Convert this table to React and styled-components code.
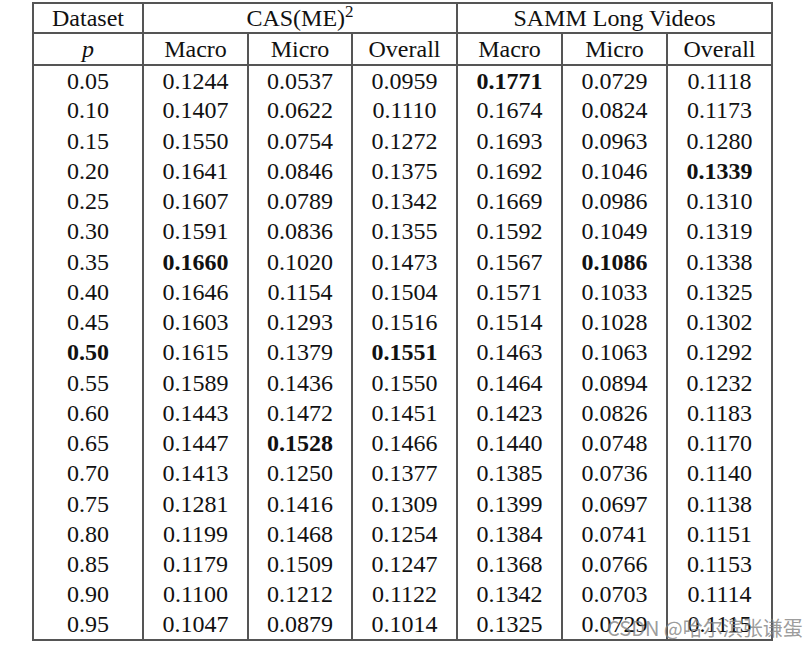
import React from 'react';
import styled, { createGlobalStyle } from 'styled-components';

const GlobalStyle = createGlobalStyle`
    body {
        margin: 0;
        background: #fff;
    }
`;

const rows = [
    ['0.05', '0.1244', '0.0537', '0.0959', '0.1771', '0.0729', '0.1118'],
    ['0.10', '0.1407', '0.0622', '0.1110', '0.1674', '0.0824', '0.1173'],
    ['0.15', '0.1550', '0.0754', '0.1272', '0.1693', '0.0963', '0.1280'],
    ['0.20', '0.1641', '0.0846', '0.1375', '0.1692', '0.1046', '0.1339'],
    ['0.25', '0.1607', '0.0789', '0.1342', '0.1669', '0.0986', '0.1310'],
    ['0.30', '0.1591', '0.0836', '0.1355', '0.1592', '0.1049', '0.1319'],
    ['0.35', '0.1660', '0.1020', '0.1473', '0.1567', '0.1086', '0.1338'],
    ['0.40', '0.1646', '0.1154', '0.1504', '0.1571', '0.1033', '0.1325'],
    ['0.45', '0.1603', '0.1293', '0.1516', '0.1514', '0.1028', '0.1302'],
    ['0.50', '0.1615', '0.1379', '0.1551', '0.1463', '0.1063', '0.1292'],
    ['0.55', '0.1589', '0.1436', '0.1550', '0.1464', '0.0894', '0.1232'],
    ['0.60', '0.1443', '0.1472', '0.1451', '0.1423', '0.0826', '0.1183'],
    ['0.65', '0.1447', '0.1528', '0.1466', '0.1440', '0.0748', '0.1170'],
    ['0.70', '0.1413', '0.1250', '0.1377', '0.1385', '0.0736', '0.1140'],
    ['0.75', '0.1281', '0.1416', '0.1309', '0.1399', '0.0697', '0.1138'],
    ['0.80', '0.1199', '0.1468', '0.1254', '0.1384', '0.0741', '0.1151'],
    ['0.85', '0.1179', '0.1509', '0.1247', '0.1368', '0.0766', '0.1153'],
    ['0.90', '0.1100', '0.1212', '0.1122', '0.1342', '0.0703', '0.1114'],
    ['0.95', '0.1047', '0.0879', '0.1014', '0.1325', '0.0729', '0.1115'],
];

// best values, "row-col"
const bold = new Set(['0-4', '3-6', '6-1', '6-5', '9-0', '9-3', '12-2']);

const colWidths = [110, 105, 104, 105, 105, 105, 105];

const App = () => {
    return (
        <>
            <GlobalStyle />
            <Page>
                <Table>
                    <colgroup>
                        {colWidths.map((w, i) => <col key={i} style={{ width: w }} />)}
                    </colgroup>
                    <thead>
                        <HeadRow $h={30}>
                            <Th>Dataset</Th>
                            <Th colSpan={3}>CAS(ME)<Sup>2</Sup></Th>
                            <Th colSpan={3}>SAMM Long Videos</Th>
                        </HeadRow>
                        <HeadRow $h={32}>
                            <Th><Italic>p</Italic></Th>
                            <Th>Macro</Th>
                            <Th>Micro</Th>
                            <Th>Overall</Th>
                            <Th>Macro</Th>
                            <Th>Micro</Th>
                            <Th>Overall</Th>
                        </HeadRow>
                    </thead>
                    <tbody>
                        {rows.map((r, ri) => (
                            <Row key={ri}>
                                {r.map((v, ci) => (
                                    <Td key={ci} $bold={bold.has(`${ri}-${ci}`)}>{v}</Td>
                                ))}
                            </Row>
                        ))}
                    </tbody>
                </Table>
                <Watermark>CSDN @哈尔滨张谦蛋</Watermark>
            </Page>
        </>
    );
};

export default App;

const serif = `"Liberation Serif", "Times New Roman", serif`;

const Page = styled.div`
    position: relative;
    width: 811px;
    height: 650px;
    padding: 2px 0 0 32px;
    box-sizing: border-box;
    font-family: ${serif};
    color: #111;
`;

const Table = styled.table`
    border-collapse: collapse;
    table-layout: fixed;
    border: 2px solid #555;
    font-family: ${serif};
    font-size: 24px;
    color: #111;
`;

const HeadRow = styled.tr`
    height: ${p => p.$h}px;
`;

const Th = styled.th`
    font-family: ${serif};
    font-size: 24px;
    font-weight: normal;
    text-align: center;
    padding: 0;
    border: 2px solid #555;
    line-height: 1;
`;

const Sup = styled.sup`
    font-size: 17px;
    line-height: 0;
    vertical-align: 9px;
`;

const Italic = styled.i`
    font-style: italic;
`;

const Row = styled.tr`
    height: 30.26px;
`;

const Td = styled.td`
    font-family: ${serif};
    font-size: 24px;
    padding: 0;
    text-align: center;
    line-height: 1;
    border-left: 2px solid #555;
    border-right: 2px solid #555;
    font-weight: ${p => (p.$bold ? 'bold' : 'normal')};
`;

const Watermark = styled.div`
    position: absolute;
    left: 607px;
    top: 616px;
    font-family: "Noto Sans CJK SC", "Noto Sans", sans-serif;
    font-size: 20px;
    line-height: 24px;
    color: rgba(130, 130, 130, 0.8);
    white-space: nowrap;
`;
